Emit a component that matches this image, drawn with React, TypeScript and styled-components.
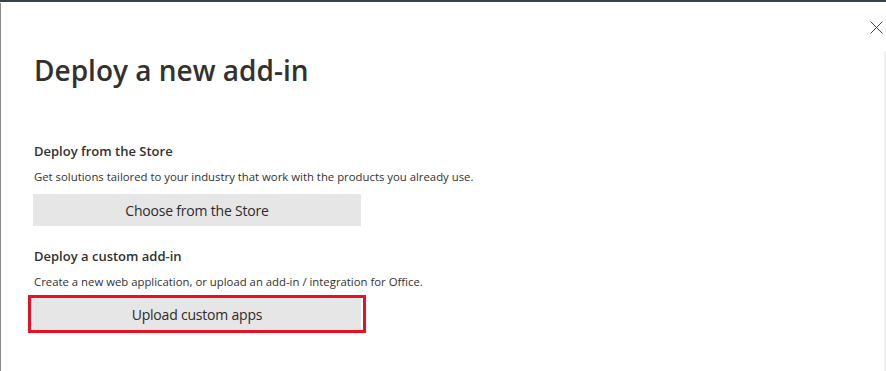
import React from 'react';
import styled, { createGlobalStyle } from 'styled-components';

const GlobalStyle = createGlobalStyle`
  html, body {
    margin: 0;
    padding: 0;
    background: #ffffff;
  }
  body {
    font-family: "Segoe UI", "Open Sans", "Noto Sans", sans-serif;
    color: #323130;
  }
`;

const Panel = styled.div`
  position: relative;
  box-sizing: border-box;
  width: 886px;
  height: 371px;
  border-top: 2px solid #37444f;
  overflow: hidden;
  display: flex;
`;

const LeftEdge = styled.div`
  width: 1px;
  background: #8a8a8a;
  margin-top: 1px;
`;

const Body = styled.div`
  flex: 1;
  display: flex;
  flex-direction: column;
  padding: 0 0 0 32px;
`;

const TopRow = styled.div`
  display: flex;
  justify-content: flex-end;
  padding: 18px 3px 0 0;
  height: 20px;
`;

const CloseButton = styled.button`
  border: none;
  background: none;
  padding: 0;
  width: 14px;
  height: 14px;
  display: flex;
  align-items: center;
  justify-content: center;
  cursor: pointer;
`;

const Title = styled.h1`
  margin: 12px 0 0 1px;
  font-size: 28px;
  font-weight: 600;
  line-height: 36px;
  color: #323130;
`;

const Section = styled.div<{ $top: number }>`
  display: flex;
  flex-direction: column;
  margin-top: ${({ $top }) => $top}px;
`;

const Heading = styled.div`
  margin-left: 1px;
  font-size: 13px;
  font-weight: 600;
  line-height: 18px;
  color: #323130;
`;

const Description = styled.div`
  margin: 9px 0 0 1px;
  font-size: 11.35px;
  line-height: 16px;
  color: #323130;
`;

const Frame = styled.div<{ $active?: boolean }>`
  margin: ${({ $active }) => ($active ? '5px 0 0 -5px' : '9px 0 0 0')};
  width: ${({ $active }) => ($active ? '338px' : '328px')};
  box-sizing: border-box;
  padding: ${({ $active }) => ($active ? '0 2px' : '0')};
  border: ${({ $active }) => ($active ? '3px solid #e81123' : 'none')};
  display: flex;
`;

const ActionButton = styled.button`
  flex: 1;
  height: 32px;
  border: none;
  background: #e6e6e6;
  font-family: "Segoe UI", "Open Sans", "Noto Sans", sans-serif;
  font-size: 14px;
  letter-spacing: -0.2px;
  color: #2b2b2b;
  cursor: pointer;
`;

const ScrollTrack = styled.div`
  position: absolute;
  right: 0;
  top: 49px;
  bottom: 0;
  width: 2px;
  background: #f1f1f1;
`;

const CloseIcon = () => (
  <svg width="13" height="13" viewBox="0 0 13 13">
    <path d="M0.5 0.5 L12.5 12.5 M12.5 0.5 L0.5 12.5" stroke="#444" strokeWidth="1" />
  </svg>
);

const App: React.FC = () => {
  return (
    <>
      <GlobalStyle />
      <Panel>
        <LeftEdge />
        <Body>
          <TopRow>
            <CloseButton aria-label="Close">
              <CloseIcon />
            </CloseButton>
          </TopRow>
          <Title>Deploy a new add-in</Title>
          <Section $top={54}>
            <Heading>Deploy from the Store</Heading>
            <Description>
              Get solutions tailored to your industry that work with the products you already use.
            </Description>
            <Frame>
              <ActionButton>Choose from the Store</ActionButton>
            </Frame>
          </Section>
          <Section $top={21}>
            <Heading>Deploy a custom add-in</Heading>
            <Description>
              Create a new web application, or upload an add-in / integration for Office.
            </Description>
            <Frame $active>
              <ActionButton>Upload custom apps</ActionButton>
            </Frame>
          </Section>
        </Body>
        <ScrollTrack />
      </Panel>
    </>
  );
};

export default App;
